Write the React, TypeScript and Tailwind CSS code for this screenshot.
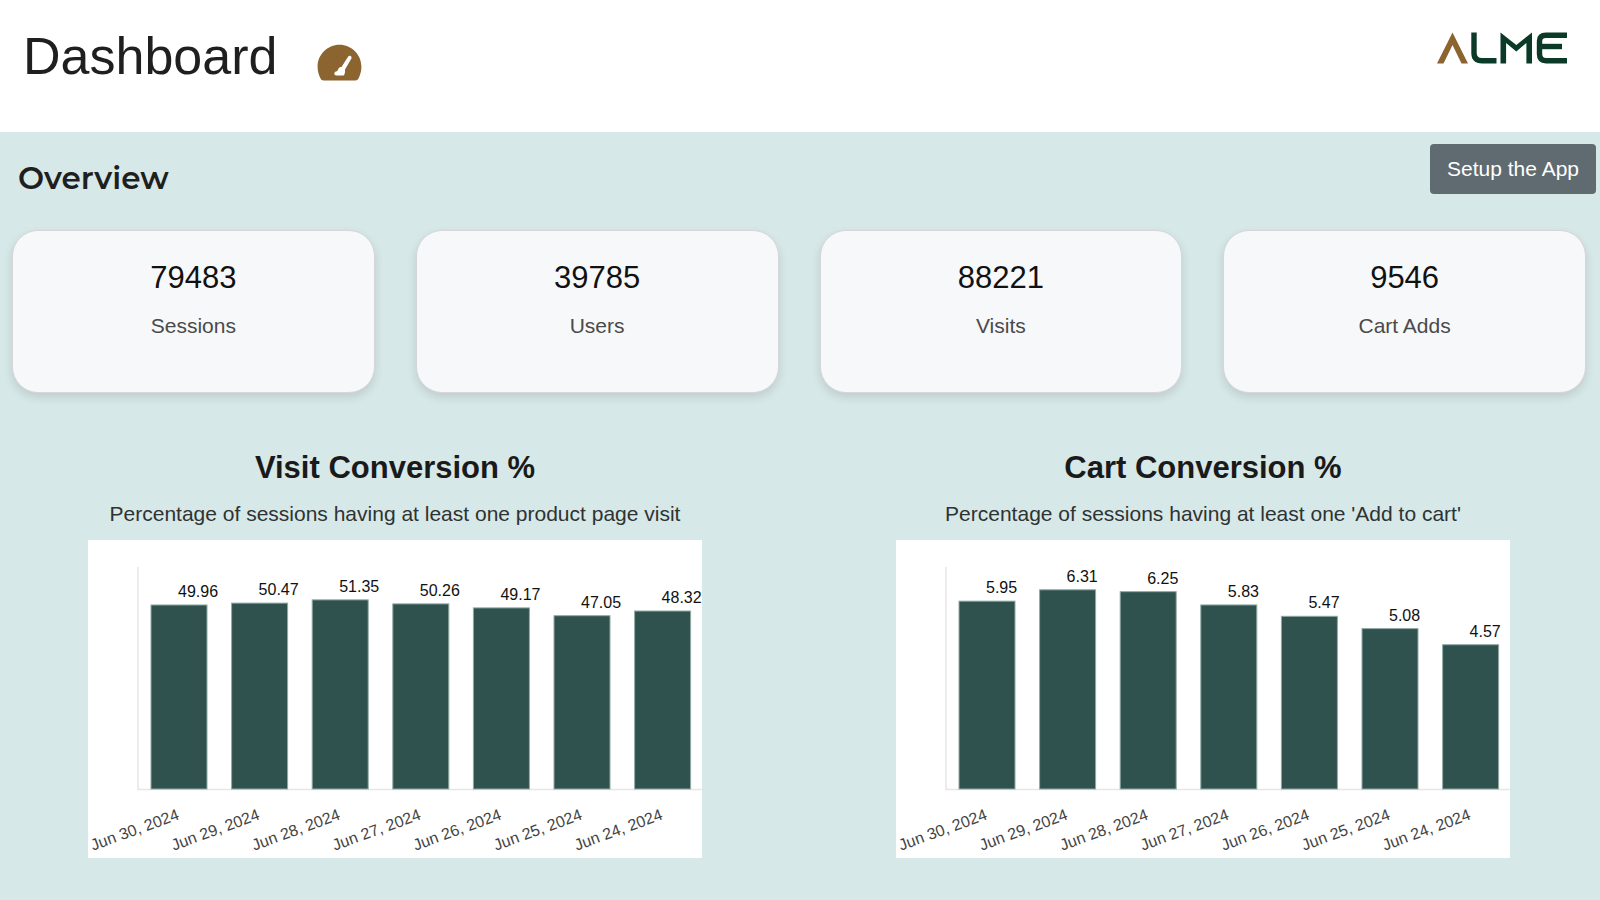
type Point = { date: string; value: number };

const stats = [
  { label: 'Sessions', value: '79483' },
  { label: 'Users', value: '39785' },
  { label: 'Visits', value: '88221' },
  { label: 'Cart Adds', value: '9546' },
];

const visitConversion: Point[] = [
  { date: 'Jun 30, 2024', value: 49.96 },
  { date: 'Jun 29, 2024', value: 50.47 },
  { date: 'Jun 28, 2024', value: 51.35 },
  { date: 'Jun 27, 2024', value: 50.26 },
  { date: 'Jun 26, 2024', value: 49.17 },
  { date: 'Jun 25, 2024', value: 47.05 },
  { date: 'Jun 24, 2024', value: 48.32 },
];

const cartConversion: Point[] = [
  { date: 'Jun 30, 2024', value: 5.95 },
  { date: 'Jun 29, 2024', value: 6.31 },
  { date: 'Jun 28, 2024', value: 6.25 },
  { date: 'Jun 27, 2024', value: 5.83 },
  { date: 'Jun 26, 2024', value: 5.47 },
  { date: 'Jun 25, 2024', value: 5.08 },
  { date: 'Jun 24, 2024', value: 4.57 },
];

function GaugeIcon() {
  return (
    <svg viewBox="0 0 45 37" className="h-[37px] w-[45px]" aria-hidden="true">
      <path
        d="M22.5 0.8C10.4 0.8 0.6 10.6 0.6 22.7c0 4.3 1.1 8.100 2.700 11.200 0.800 1.700 1.800 2.500 3.300 2.500h31.800c1.500 0 2.500-0.800 3.300-2.500 1.600-3.100 2.700-6.900 2.700-11.200C44.4 10.6 34.6 0.8 22.5 0.8Z"
        fill="#8b6430"
      />
      <path
        d="M31.200 12.600c1.200-1.900 4.200-0.300 3.200 1.800L28 25.600c0.300 1.500 0.100 3-0.500 4.600-0.300 0.900-0.800 1.200-1.600 1.200h-6.600c-2.400 0-2.600-3-0.600-3.900 1.900-0.600 2-1.200 2.600-2.600 0.600-1.400 1.700-1.900 3.200-1.900Z"
        fill="#fff"
      />
    </svg>
  );
}

function Logo() {
  return (
    <svg viewBox="0 0 131 32" className="h-8 w-[131px]" role="img" aria-label="ALME">
      <path d="M0 31.5 L15.5 0.5 L31 31.5 H24.500 L15.5 13 L6.500 31.5 Z" fill="#8b6430" />
      <g fill="none" stroke="#0b3b28" strokeWidth="5.400">
        <path d="M37 0.5 V21 Q37 28.7 45 28.7 H59.5" />
        <path d="M130 3.200 H109 Q102.500 3.200 102.500 9 V22 Q102.500 28.700 109 28.700 H130" />
        <path d="M102.500 14.500 H125" />
      </g>
      <path d="M63.500 31.500 V0.500 L79.300 13 L95 0.500 V31.500 H89.400 V11 L79.300 19.500 L69.100 11 V31.500 Z" fill="#0b3b28" />
    </svg>
  );
}

const AXIS_X = 50;
const BASE_Y = 249;
const PLOT_HEIGHT = 221;
const STEP = 80.6;

function BarChart({ data, max, label }: { data: Point[]; max: number; label: string }) {
  return (
    <svg viewBox="0 0 614 318" className="w-full max-w-[614px] bg-white" role="img" aria-label={label}>
      <path d={`M${AXIS_X} 27V${BASE_Y + 0.5}H614`} fill="none" stroke="#e6e6e6" strokeWidth="1.500" />
      {data.map(({ date, value }, i) => {
        const height = (value / max) * PLOT_HEIGHT;
        const top = BASE_Y - height;
        const left = 63 + i * STEP;
        const middle = left + 28;
        return (
          <g key={date} fontSize="16">
            <rect x={left} y={top} width="56" height={height} fill="#2f524f" stroke="#8fa9a4" strokeWidth="1" />
            <text x={middle - 1} y={top - 8} fill="#111">
              {value.toFixed(2)}
            </text>
            <text transform={`translate(${middle + 1} 279) rotate(-20)`} textAnchor="end" fill="#444">
              {date}
            </text>
          </g>
        );
      })}
    </svg>
  );
}

function ChartPanel({ title, subtitle, data, max }: { title: string; subtitle: string; data: Point[]; max: number }) {
  return (
    <section className="flex flex-col items-center">
      <h3 className="text-[31px] leading-[38px] font-bold text-[#1a1a1a]">{title}</h3>
      <p className="mt-[13px] mb-3 text-[21px] leading-7 text-[#2e3333]">{subtitle}</p>
      <BarChart data={data} max={max} label={title} />
    </section>
  );
}

export default function App() {
  return (
    <div className="flex min-h-screen flex-col bg-[#d7e8e8] font-['Liberation_Sans',Arial,sans-serif] text-[#1f1f1f]">
      <header className="flex h-[132px] items-start justify-between bg-white pr-8 pl-[23px]">
        <div className="flex items-start gap-10 pt-6">
          <h1 className="text-[52px] leading-[64px]">Dashboard</h1>
          <div className="pt-5">
            <GaugeIcon />
          </div>
        </div>
        <div className="pt-8">
          <Logo />
        </div>
      </header>

      <main className="flex flex-col">
        <div className="flex items-start justify-between pt-3 pr-1 pl-[18px]">
          <h2 className="pt-3 font-['Montserrat',Inter,sans-serif] text-[31px] leading-[44px] font-semibold">Overview</h2>
          <button type="button" className="h-[50px] rounded bg-[#5f6b71] px-[17px] text-[21px] text-white">
            Setup the App
          </button>
        </div>

        <div className="mt-[30px] grid grid-cols-4 gap-[41px] pr-[14px] pl-3">
          {stats.map(({ label, value }) => (
            <div
              key={label}
              className="flex h-[163px] flex-col items-center rounded-[26px] border border-[#d6d6d6] bg-[#f7f8fa] pt-[27px] shadow-[0_4px_10px_rgba(0,0,0,0.12)]"
            >
              <div className="text-[31px] leading-10 text-[#111]">{value}</div>
              <div className="mt-[14px] text-[21px] leading-7 text-[#4a4a4a]">{label}</div>
            </div>
          ))}
        </div>

        <div className="mt-14 grid grid-cols-2 gap-[42px] pr-[14px] pb-8 pl-3">
          <ChartPanel
            title="Visit Conversion %"
            subtitle="Percentage of sessions having at least one product page visit"
            data={visitConversion}
            max={60}
          />
          <ChartPanel
            title="Cart Conversion %"
            subtitle="Percentage of sessions having at least one 'Add to cart'"
            data={cartConversion}
            max={7}
          />
        </div>
      </main>
    </div>
  );
}
